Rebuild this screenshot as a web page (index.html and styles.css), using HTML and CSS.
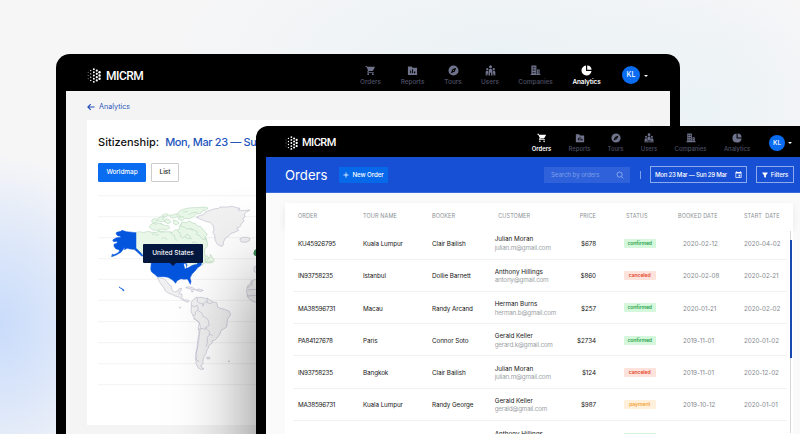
FILE: index.html
```html
<!DOCTYPE html>
<html lang="en">
<head>
<meta charset="utf-8">
<title>MICRM</title>
<link rel="stylesheet" href="styles.css">
</head>
<body>
<svg class="defs" aria-hidden="true">
  <symbol id="logo" viewBox="0 0 42 46">
    <g fill="#fff">
      <circle cx="3" cy="13" r="1.3"/><circle cx="3" cy="23" r="1.3"/><circle cx="3" cy="33" r="1.3"/>
      <circle cx="11" cy="8" r="2.200"/><circle cx="11" cy="18" r="2.200"/><circle cx="11" cy="28" r="2.200"/><circle cx="11" cy="38" r="2.200"/>
      <circle cx="20.500" cy="3.500" r="3"/><circle cx="20.500" cy="13" r="3"/><circle cx="20.500" cy="23" r="3"/><circle cx="20.500" cy="33" r="3"/><circle cx="20.500" cy="42.500" r="3"/>
      <circle cx="29.500" cy="8" r="3.400"/><circle cx="29.500" cy="18" r="3.400"/><circle cx="29.500" cy="28" r="3.400"/><circle cx="29.500" cy="38" r="3.400"/>
      <circle cx="38" cy="13" r="3.700"/><circle cx="38" cy="23" r="3.700"/><circle cx="38" cy="33" r="3.700"/>
    </g>
  </symbol>
  <symbol id="cart" viewBox="0 0 24 24"><path d="M7 18c-1.100 0-2 .9-2 2s.9 2 2 2 2-.9 2-2-.9-2-2-2zM1 2v2h2l3.600 7.600-1.400 2.400C4.500 15.400 5.500 17 7 17h12v-2H7.400l1.100-2h7.500c.8 0 1.400-.4 1.700-1L22 4H5.200l-.9-2H1zm16 16c-1.100 0-2 .9-2 2s.9 2 2 2 2-.9 2-2-.9-2-2-2z"/></symbol>
  <symbol id="reports" viewBox="0 0 24 24"><path fill-rule="evenodd" d="M2 3h8l2 3h10v16H2zM7 12v6h2v-6zm4-3v9h2V9zm4 5v4h3v-4z"/></symbol>
  <symbol id="compass" viewBox="0 0 24 24"><path fill-rule="evenodd" d="M12 1a11 11 0 1 0 0 22 11 11 0 0 0 0-22zm2.500 13.500L6 18l3.500-8.500L18 6z"/><circle cx="12" cy="12" r="1.300"/></symbol>
  <symbol id="users" viewBox="0 0 24 24"><circle cx="12" cy="4" r="3.300"/><circle cx="5" cy="9" r="2.500"/><circle cx="19" cy="9" r="2.500"/><path d="M8 23V12c0-5 8-5 8 0v11h-2.800v-6h-2.400v6zM1.500 23v-7c0-4.500 5.500-4.500 5.500-1v8H5.500v-4H4v4zM22.500 23v-7c0-4.500-5.500-4.500-5.500-1v8h1.500v-4H20v4z"/></symbol>
  <symbol id="building" viewBox="0 0 24 24"><path fill-rule="evenodd" d="M3 1h11v9h7v10h2v2H1v-2h2zm3 3v3h2V4zm4 0v3h1.500V4zM6 9.500v3h2v-3zm4 0v3h1.500v-3zM6 15v3h2v-3zm4 0v3h1.500v-3zm4-5v10h1.500V10zm3.500 2.500v2H19v-2zm0 4v2H19v-2z"/></symbol>
  <symbol id="pie" viewBox="0 0 24 24"><path d="M11 1v12h12A11 11 0 1 1 11 1z"/><path d="M13.500 1A10 10 0 0 1 23 10.500h-9.500z"/></symbol>
</svg>

<section class="device device-back">
  <header class="topbar">
    <svg class="logo"><use href="#logo"/></svg><span class="brand">MICRM</span>
    <nav class="nav">
      <a><svg><use href="#cart"/></svg><span>Orders</span></a>
      <a><svg><use href="#reports"/></svg><span>Reports</span></a>
      <a><svg><use href="#compass"/></svg><span>Tours</span></a>
      <a><svg><use href="#users"/></svg><span>Users</span></a>
      <a><svg><use href="#building"/></svg><span>Companies</span></a>
      <a class="active"><svg><use href="#pie"/></svg><span>Analytics</span></a>
    </nav>
    <span class="avatar">KL</span><i class="caret"></i>
  </header>
  <main class="analytics">
    <a class="back"><svg viewBox="0 0 8 8"><path d="M7.500 4H1M3.700 1.200.9 4l2.800 2.800"/></svg>Analytics</a>
    <div class="map-card">
      <h2><span class="title">Sitizenship:</span><span class="range">Mon, Mar 23 — Su</span></h2>
      <div class="tabs"><span class="tab primary">Worldmap</span><span class="tab">List</span></div>
      <div class="map">
        <svg viewBox="24 0 540 705">
          <path class="lines" d="M24 17H564M24 80H564M24 143H564M24 206H564M24 268H564M24 331H564M24 395H564M24 458H564M24 521H564M24 584H564"/>
          <g class="canada">
            <path d="M138 127l12-2 10 3 14-4 12 3 14 0 9-4 12 3 14-1 12 2 9-8 10 1 4-15 10-7 12 7 4 11 12 4 8-5 14 8 8 12 10 8 4 14 0 12-9 10 2 20 7-2 4 8 10 6 0 7-12 1-9-1-9 8-4-4 0-8-10 3-12 9-80 0-88-43-17-6-10-5z"/>
            <path d="M346 205l7 3 8-8 0-7 6 9 6 9-3 5-7-1-7 2-4-3-6 1z"/>
            <path d="M178 108l10-8 10 2 12-3 16 8 9 0 4 7-10 6-16-3-10 4-14-1-8-5z"/>
            <path d="M188 88l9-3 5 5-2 8-10 0-6-4zM204 84l10-4 10 3-6 4 8 6-14 2-10-3z"/>
            <path d="M228 86l10 3 4 8-8 4-10-5zM238 76l10-1 12-4 4 8-8 4-12 1zM250 90l10 2 8 7-9 6-8-4zM218 74l12-3 6 4-12 6-8-3z"/>
            <path d="M262 72l8-10 16-6 18-3 20 0 18-2 12 3-4 5-12 3-4 7-16 4-8 8-12 5-14-1-8 7-10-4-2-6 8-3z"/>
            <path d="M275 96l14 2 10-5 10 7 7 0 6 8 10 2 12 14 8 10-8 8 4 8-10-2-10-12-8-2 2-9-10-5-10-5-12 2-8-6-10-2zM290 133l8 4 6 9-12-1-8-4z"/>
            <path class="borders" d="M186 134l8-3 4 5 9-2M214 146l10-3 8 5M204 119l8 8 12-4M240 124l6 10 8 2 0 10 8 6M262 124l8 4 2 12 10 4M212 100l6 6M296 74l12-6 14 0M280 66l14-2M268 82l14-2M306 158l10-2 8 8"/>
          </g>
          <g class="land">
            <path d="M319 82l12-6 10-2 4-7 15-6 12-4 14-2 4-4 22 0 14-2 14 4 10 2-6 5 14 2 22-2-10 6-7 6 2 9-7 5 4 8-8 7-4 9-10 4 6 7-8 4-16 6-6 7-9 5-6 12-2 12-6 2-11-6-7-13-1-15-6-8 4-7-3-13-8-10-14-3-9-4z"/>
            <path d="M450 146l8-4 14 0 8 4-2 6-10 5-14-1-3-4z"/>
            <path d="M202 262l19 4 11 10 5 8 7 4 2 12 7 6 11-3 3-7 8-1-3 9-4 3-1 3 9 3 0 10 7 7 10 0 5 3-4 4-12-5-8-4-6-7-13-3-8-4-12-5-9-6-4-9-7-9-7-10z"/>
            <path d="M287 293l9-3 14 4 7 5-10 0-9-3zM318 300l8-3 7 2 7 2-9 4zM303 303l7 1-2 2z"/>
            <path d="M304 336l7-8 9-7 3 2 11-1 10 3 9 0 11 8 5 3 11 2 3 13 6 3 15 4 14 6 4 10-9 13-2 12-1 12-9 6-7 3-4 12-9 12-7 7-7 1 0 7-10 7-2 8-5 8-2 9-6 9-3 12 0 10-6 4 5 10 4 0-8 3-10-6-6-13 0-12 3-10-2-10 4-17 3-18 2-19 3-22-3-15-12-8-6-11-7-13 1-8z"/>
            <path class="borders" d="M321 322l1 12 9 7 6-1 2 9 3-10 10-6M352 325l-1 13 10 3 8-4M304 347l11 3 7-4 3 14-9 6 0 8-8 5M325 362l11 8 3 9 13 7 4 8 1 13-8 4-3 7-13-3-5 5-3-8 3-11-6-9-13-7M346 413l12 11 0 9 10 3M325 413l2 19-4 20-2 22-4 18 0 16 11 7M360 432l-8 10 0 14-3 14"/>
            <path d="M350 502l8-1 2 5-8 1zM414 513l5 0-2 3zM268 352l4 0-1 3z"/>
            <path d="M498 268l-13 4-4 8-8 8-3 12 1 12 4 12 11 9 12 4 66 4V268zM498 228l-6 4 0 12 6 4 66 0v-20z"/>
            <path class="borders" d="M485 282l-12 12M474 300l26-2M486 272l0 14M470 318l28-2"/>
          </g>
          <path class="europe" d="M500 176l-7 5-3 10 4 6 6 2z"/>
          <path class="usa" d="M138 128l-28-3-14-4-4 3-12 3-2 5 6 6 7 0 1 4-12 1-6 3-6 4 3 5 10-1 1 5-10 4 0 6 5 7 9 3 3 4-7 7-17 7 0 3 12-4 16-9 8-11 4-4-2 7 9-4 8 2 13 1 9 8 12 11 7 2-12-14-11-10z"/>
          <path class="usa" d="M184 216l90 0 16 5 0 8-5 4 8 1 15-8 12-3 8-9 7 1-2 11-10 7-8 10-9 9-6 12 3 10-2 9-5-10-4-6-11 1-8-2-12 6-4 8-9-10-14-8-12-2-20 0-8-7-9-7-3-8z"/>
          <path class="usa" d="M87 291l3 1 1 2zM92 294l5 2-3 1zM97 297l5 3-1 3-3-2zM66 193l4 0-3 3z"/>
          <path class="lake" d="M281 221l5 0 2 4 0 9-3 3-2-8zM292 224l8-3 9 1-7 4-6 4-2-4z"/>
        </svg>
        <div class="tooltip">United States</div>
      </div>
    </div>
  </main>
</section>

<section class="device device-front">
  <header class="topbar">
    <svg class="logo"><use href="#logo"/></svg><span class="brand">MICRM</span>
    <nav class="nav">
      <a class="active"><svg><use href="#cart"/></svg><span>Orders</span></a>
      <a><svg><use href="#reports"/></svg><span>Reports</span></a>
      <a><svg><use href="#compass"/></svg><span>Tours</span></a>
      <a><svg><use href="#users"/></svg><span>Users</span></a>
      <a><svg><use href="#building"/></svg><span>Companies</span></a>
      <a><svg><use href="#pie"/></svg><span>Analytics</span></a>
    </nav>
    <span class="avatar">KL</span><i class="caret"></i>
  </header>
  <div class="toolbar">
    <h1>Orders</h1>
    <span class="new"><svg viewBox="0 0 6 6"><path d="M3 .5v5M.5 3h5"/></svg>New Order</span>
    <span class="search">Search by orders<svg viewBox="0 0 8 8"><circle cx="3.600" cy="3.600" r="2.600"/><path d="M5.500 5.500 7.300 7.300"/></svg></span>
    <i class="sep"></i>
    <span class="outline date">Mon 23 Mar — Sun 29 Mar<svg viewBox="0 0 7 7"><path fill-rule="evenodd" d="M1.300.3h.8v.6h2.800V.3h.8v.6H6.500v5.800H.5V.9h.8zM1.200 2.600V6h4.600V2.600zM3.600 3.800h1.600v1.600H3.600z"/></svg></span>
    <span class="outline filters"><svg viewBox="0 0 6 6"><path d="M.4.5h5.200v.8L3.900 3.200v2.600L2.100 4.900V3.200L.4 1.300z"/></svg>Filters</span>
  </div>
  <main class="orders">
    <div class="thead row"><span>ORDER</span><span>TOUR NAME</span><span>BOOKER</span><span class="h-customer">CUSTOMER</span><span class="price">PRICE</span><span class="h-status">STATUS</span><span>BOOKED DATE</span><span class="h-start">START&nbsp; DATE</span></div>
    <div class="tbody">
      <div class="row"><span>KU45926795</span><span>Kuala Lumpur</span><span>Clair Bailish</span><span class="who">Julian Moran<small>julian.m@gmail.com</small></span><span class="price">$678</span><b class="badge ok">confirmed</b><time class="booked">2020-02-12</time><time>2020-04-02</time></div>
      <div class="row"><span>IN93758235</span><span>Istanbul</span><span>Dollie Barnett</span><span class="who">Anthony Hillings<small>antony@gmail.com</small></span><span class="price">$860</span><b class="badge bad">canceled</b><time class="booked">2020-02-08</time><time>2020-02-21</time></div>
      <div class="row"><span>MA38596731</span><span>Macau</span><span>Randy Arcand</span><span class="who">Herman Burns<small>herman.b@gmail.com</small></span><span class="price">$257</span><b class="badge ok">confirmed</b><time class="booked">2020-01-21</time><time>2020-02-02</time></div>
      <div class="row"><span>PA84127678</span><span>Paris</span><span>Connor Soto</span><span class="who">Gerald Keller<small>gerard.k@gmail.com</small></span><span class="price">$2734</span><b class="badge ok">confirmed</b><time class="booked">2019-11-01</time><time>2020-01-02</time></div>
      <div class="row"><span>IN93758235</span><span>Bangkok</span><span>Clair Bailish</span><span class="who">Julian Moran<small>julian.m@gmail.com</small></span><span class="price">$124</span><b class="badge bad">canceled</b><time class="booked">2019-11-01</time><time>2020-12-02</time></div>
      <div class="row"><span>MA38596731</span><span>Kuala Lumpur</span><span>Randy George</span><span class="who">Gerald Keller<small>gerald@gmail.com</small></span><span class="price">$987</span><b class="badge wait">payment</b><time class="booked">2019-10-12</time><time>2020-01-01</time></div>
      <div class="row last"><span></span><span></span><span></span><span class="who">Anthony Hillings</span><span></span><b class="badge ok"></b></div>
      <i class="track"><i class="thumb"></i></i>
    </div>
  </main>
</section>
</body>
</html>
```
FILE: styles.css
```css
* { box-sizing: border-box; }
html { background: #fff; }
body {
  margin: 0; width: 800px; height: 434px; overflow: hidden; position: relative;
  font-family: Inter, "Liberation Sans", sans-serif; white-space: nowrap;
  background:
    radial-gradient(ellipse 130px 170px at 0 325px, #c9dcfb 0, rgba(210, 225, 250, .75) 45%, rgba(245, 246, 248, 0) 100%),
    radial-gradient(ellipse 330px 120px at 500px 50px, #ebf2f5 0, rgba(245, 246, 247, 0) 100%),
    radial-gradient(ellipse 150px 120px at 700px 110px, #ebf2f6 0, rgba(245, 246, 247, 0) 100%),
    #f6f6f7;
}
.defs { position: absolute; width: 0; height: 0; }
i { display: block; }

.device { position: absolute; background: #000; overflow: hidden; }
.device-back { left: 56px; top: 54px; width: 624px; height: 380px; padding: 0 10px; border-radius: 14px 14px 0 0; }
.device-front { left: 256px; top: 126px; width: 544px; height: 308px; padding-left: 10px; border-radius: 12px 0 0 0; box-shadow: 0 150px 80px rgba(0, 0, 0, .5); }

.topbar { display: flex; color: #fff; }
.brand { font-family: Roboto, sans-serif; font-weight: 500; }
.nav { display: grid; }
.nav a { display: flex; flex-direction: column; align-items: center; color: #4d4f64; font-weight: 500; }
.nav svg { fill: #70738c; }
.nav .active { color: #fff; font-weight: 600; }
.nav .active svg { fill: #fff; }
.nav span { display: flex; justify-content: center; width: 0; }
.avatar { background: #0a6cf0; border-radius: 50%; text-align: center; font-weight: 500; flex: none; }
.caret { border: 2px solid transparent; border-top-color: #fff; border-bottom: 0; flex: none; }

.device-back .topbar { height: 37px; padding-left: 21px; }
.device-back .logo { width: 14px; height: 15px; margin-top: 14px; flex: none; }
.device-back .brand { font-size: 12px; line-height: 14px; margin: 15px 0 0 5px; width: 254.500px; flex: none; letter-spacing: -.5px; }
.device-back .nav { grid-template-columns: 20px 24px 17px 17px 34px 28px; column-gap: 20px; padding-top: 11px; }
.device-back .nav svg { width: 11px; height: 11px; }
.device-back .nav span { font-size: 6.400px; line-height: 8px; margin-top: 2px; }
.device-back .nav .active span { letter-spacing: -.1px; }
.device-back .avatar { width: 18px; height: 18px; margin: 12px 0 0 21.500px; font-size: 7px; line-height: 18px; }
.device-back .caret { margin: 21px 0 0 4px; }

.analytics { height: 383px; background: #f4f4f4; padding: 10px 20px 0 21px; }
.back { display: flex; align-items: center; gap: 4px; height: 11px; color: #2d57bd; font-size: 7.200px; }
.back svg { width: 8px; height: 8px; fill: none; stroke: #1f4bb8; stroke-width: 1.100; }
.map-card { margin-top: 8px; height: 305px; background: #fff; padding: 13px 11px 0; }
h2 { margin: 0; display: flex; gap: 6px; height: 18px; align-items: center; font-size: 11px; font-weight: 500; color: #111; letter-spacing: .02px; }
.range { color: #1d55bd; letter-spacing: -.36px; }
.tabs { display: flex; gap: 5px; margin-top: 12px; }
.tab { height: 19px; width: 28px; border: 1px solid #ccc; border-radius: 1px; font-size: 6.500px; line-height: 17px; text-align: center; color: #222; font-weight: 500; }
.tab.primary { width: 48px; background: #0a6cf0; border-color: #0a6cf0; color: #fff; letter-spacing: -.08px; }
.map { position: relative; width: 180px; height: 235px; margin-top: 8px; }
.map svg { display: block; width: 180px; height: 235px; stroke-linejoin: round; }
.lines { stroke: #f3f3f3; stroke-width: 3; }
.canada { fill: #e9f7e9; stroke: #b5d9bb; stroke-width: 1.800; }
.land { fill: #f1f1f2; stroke: #b9bacb; stroke-width: 1.800; }
.borders { fill: none; }
.europe { fill: #3e8b58; }
.usa { fill: #0455de; stroke: #0455de; stroke-width: 1.500; }
.lake { fill: #eef5ff; }
.tooltip { position: absolute; left: 45px; top: 54px; width: 60px; height: 19px; background: #03173f; color: #fff; font-size: 6.500px; font-weight: 500; line-height: 19px; text-align: center; border-radius: 1px; }
.tooltip::after { content: ""; position: absolute; left: 27px; top: 19px; border: 3px solid transparent; border-top-color: #03173f; border-bottom: 0; }

.device-front .topbar { height: 31px; padding-left: 19px; }
.device-front .logo { width: 13px; height: 14px; margin-top: 9.500px; flex: none; }
.device-front .brand { font-size: 11px; line-height: 14px; margin: 10px 0 0 4px; width: 230px; flex: none; letter-spacing: -.55px; }
.device-front .nav { grid-template-columns: 19px 21px 15px 16px 31px 26px; column-gap: 18px; padding-top: 7px; }
.device-front .nav svg { width: 10px; height: 10px; }
.device-front .nav span { font-size: 5.900px; line-height: 8px; margin-top: 2px; }
.device-front .avatar { width: 16px; height: 16px; margin: 8.500px 0 0 19px; font-size: 6.500px; line-height: 16px; }
.device-front .caret { margin: 16px 0 0 3px; }

.toolbar { height: 36px; background: #1850d5; display: flex; align-items: center; padding-left: 19px; color: #fff; font-size: 6.200px; border-bottom: 1px solid #3a69d8; }
h1 { margin: 0; width: 53.500px; font-size: 13.200px; font-weight: 400; }
.new { width: 49px; height: 16px; background: #0669ea; display: flex; align-items: center; justify-content: center; gap: 4px; font-weight: 500; letter-spacing: -.1px; }
.new svg { width: 6px; height: 6px; stroke: #fff; stroke-width: .8; }
.search { margin-left: 156.500px; width: 86px; height: 16px; background: #2f62da; color: #7c9ee8; display: flex; align-items: center; justify-content: space-between; padding: 0 6.500px 0 7px; letter-spacing: -.1px; }
.search svg { width: 8px; height: 8px; fill: none; stroke: #8eabec; stroke-width: .9; }
.sep { width: 1px; height: 8px; background: #7f9fe8; margin: 0 9px 0 10px; }
.outline { height: 17px; border: 1px solid #8cabed; display: flex; align-items: center; font-weight: 500; }
.date { width: 97px; justify-content: space-between; padding: 0 4px; font-size: 6.100px; letter-spacing: -.27px; }
.date svg { width: 7px; height: 7px; flex: none; fill: #fff; }
.filters { width: 38px; margin-left: 9px; justify-content: center; gap: 3px; letter-spacing: -.1px; }
.filters svg { width: 6px; height: 6px; fill: #fff; }

.orders { width: 534px; height: 241px; background: #fafafa; padding: 10px 0 0 19px; }
.row { display: grid; grid-template-columns: 65px 69px 62.700px 61px 40.300px 82px 66px 36px; align-items: center; }
.thead { position: relative; width: 508px; height: 24.300px; padding: 1.500px 0 0 13px; background: #fff; color: #8a8f94; font-size: 5.500px; letter-spacing: .1px; box-shadow: 0 3px 7px rgba(0, 0, 0, .08); }
.h-customer { padding-left: 3.500px; }
.h-status { padding-left: 30px; }
.tbody { position: relative; width: 508px; height: 206.700px; background: #fff; padding: 0 6px 0 7.500px; overflow: hidden; }
.tbody .row { height: 32.300px; padding: 2px 0 0 5.500px; border-bottom: 1px solid #f1f1f1; font-size: 6.300px; letter-spacing: -.08px; color: #151515; }
.tbody .row > span:first-child { letter-spacing: -.22px; }
.who { line-height: 8.600px; letter-spacing: 0; }
.who small { display: block; font-size: 6.300px; letter-spacing: -.2px; color: #9b9fa5; }
.tbody .row.last { height: 12.900px; padding-top: 8.500px; border: 0; align-items: start; }
.last .badge { margin-top: 3px; }
.price { text-align: right; }
.badge { margin-left: 27.700px; width: 32px; height: 9px; border-radius: 1px; font-size: 5.200px; line-height: 8.500px; font-weight: 600; letter-spacing: -.15px; text-align: center; margin-top: -1.500px; }
.ok { background: #d5f8dd; color: #2ca44c; }
.bad { background: #fee3dc; color: #e5482f; }
.wait { background: #fff0dc; color: #f3a43d; }
time { color: #85898e; }
.booked { padding-left: 5px; }
.track { position: absolute; left: 505px; top: 4px; width: 1px; height: 202px; background: #d3d5d8; }
.thumb { position: absolute; left: -.5px; top: 9px; width: 2px; height: 118px; background: #1747b0; }
```
